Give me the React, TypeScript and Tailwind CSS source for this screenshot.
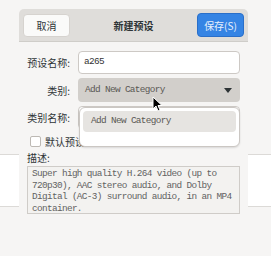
import * as React from "react";

const CJK = "font-['Noto_Sans_CJK_SC','Noto_Sans',sans-serif]";
const MONO =
  "font-['Liberation_Mono','DejaVu_Sans_Mono',monospace] text-[9.4px] tracking-[-0.64px]";

function Cursor() {
  return (
    <svg
      className="absolute left-[152px] top-[96px] h-[16px] w-[11px]"
      viewBox="0 0 11 16"
      aria-hidden="true"
    >
      <path
        d="M1 1 L1 13 L4 10 L6 15 L8 14 L6 9.5 L10 9.5 Z"
        fill="#000"
        stroke="#fff"
        strokeWidth="1"
        strokeLinejoin="round"
      />
    </svg>
  );
}

export default function App() {
  return (
    <div
      className={`relative h-[256px] w-[271px] overflow-hidden bg-[#f6f5f4] ${CJK} text-[10px] text-[#2e3436]`}
    >
      {/* parent window peeking out behind the dialog */}
      <div className="absolute left-[-2px] right-[-2px] top-[154px] h-[53px] border border-[#dcdad7] bg-white" />

      {/* Dialog */}
      <div className="relative ml-[19px] mt-[9px] w-[229px] bg-[#f6f5f4]">
        {/* Header */}
        <header className="flex h-[33px] items-center justify-between rounded-t-[5px] border-b border-[#cfcdc9] bg-[#dfddda] px-[4px]">
          <button
            type="button"
            className="flex h-[23px] w-[47px] items-center justify-center rounded-[4px] border border-[#d6d3cf] bg-[#fafaf9]"
          >
            取消
          </button>
          <span className="font-bold">新建预设</span>
          <button
            type="button"
            className="flex h-[24px] w-[47px] items-center justify-center rounded-[4px] border border-[#2a6fc9] bg-[#3584e4] text-[#e8f0fc]"
          >
            保存(S)
          </button>
        </header>

        {/* Form */}
        <div className="grid grid-cols-[43px_1fr] items-center gap-x-[8px] gap-y-[4px] px-[8px] pt-[9px]">
          <label className="whitespace-nowrap text-right">预设名称:</label>
          <div
            className={`flex h-[23px] items-center rounded-[4px] border border-[#cdc9c5] bg-white px-[5px] ${MONO} text-[#333]`}
          >
            a265
          </div>

          <label className="text-right">类别:</label>
          <div
            className={`flex h-[24px] items-center justify-between rounded-[4px] bg-[#d2cfcb] pl-[7px] pr-[8px] ${MONO} text-[#5a5854]`}
          >
            <span>Add New Category</span>
            <svg className="h-[5px] w-[8px]" viewBox="0 0 8 5" aria-hidden="true">
              <path d="M0 0 H8 L4 5 Z" fill="#2e3436" />
            </svg>
          </div>

          <label className="whitespace-nowrap text-right">类别名称:</label>
          <div className="h-[23px] rounded-[4px] border border-[#cdc9c5] bg-white" />
        </div>

        <div className="flex items-center gap-[4px] pl-[11px] pt-[5px]">
          <span className="h-[11px] w-[11px] rounded-[2px] border border-[#bdb9b4] bg-white" />
          <span>默认预设</span>
        </div>

        <div className="px-[8px] pt-[2px]">
          <div className="leading-[13px]">描述:</div>
          <div
            className={`mt-[2px] h-[48px] border border-[#cfccc8] bg-[#f3f2f0] px-[4px] pt-[1px] ${MONO} leading-[11.7px] text-[#626262]`}
          >
            Super high quality H.264 video (up to
            <br />
            720p30), AAC stereo audio, and Dolby
            <br />
            Digital (AC-3) surround audio, in an MP4
            <br />
            container.
          </div>
        </div>
        <div className="h-[12px]" />
      </div>

      {/* Category dropdown popover */}
      <div className="absolute left-[79px] top-[107px] h-[40px] w-[161px] rounded-[6px] border border-[#cbc7c3] bg-white p-[3px] shadow-[0_1px_2px_rgba(0,0,0,0.12)]">
        <div
          className={`flex h-[21px] items-center rounded-[4px] bg-[#e6e4e1] pl-[8px] ${MONO} text-[#5a5854]`}
        >
          Add New Category
        </div>
      </div>

      <Cursor />
    </div>
  );
}
